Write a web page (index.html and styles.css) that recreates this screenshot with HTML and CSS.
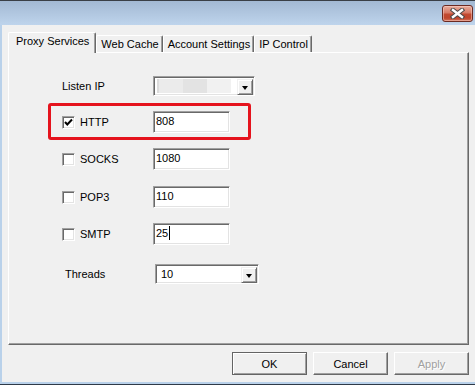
FILE: index.html
```html
<!DOCTYPE html>
<html lang="en">
<head>
<meta charset="UTF-8">
<title>Proxy Settings</title>
<link rel="stylesheet" href="styles.css">
</head>
<body>
  <div class="window">
    <div class="titlebar">
      <button class="close">
        <svg width="15" height="11" viewBox="0 0 15 11">
          <path d="M3 2 L12 9 M12 2 L3 9" stroke="#4a4a4a" stroke-width="4.4" stroke-linecap="square"/>
          <path d="M3 2 L12 9 M12 2 L3 9" stroke="#fff" stroke-width="2.4" stroke-linecap="square"/>
        </svg>
      </button>
    </div>

    <div class="client">
      <div class="tabs">
        <div class="tab active">Proxy Services</div>
        <div class="tab">Web Cache</div>
        <div class="tab">Account Settings</div>
        <div class="tab">IP Control</div>
      </div>

      <div class="panel">
        <div class="fields">
          <div class="row row-ip">
            <span class="label">Listen IP</span>
            <div class="combo">
              <div class="combo-value blurred"></div>
              <span class="drop"><i></i></span>
            </div>
          </div>

          <div class="highlight">
            <div class="row">
              <label class="label check"><span class="box"><svg width="9" height="9" viewBox="0 0 9 9"><path d="M1 4 L3.3 6.5 L8 1.5" fill="none" stroke="#000" stroke-width="2"/></svg></span>HTTP</label>
              <div class="edit">808</div>
            </div>
          </div>

          <div class="row row-socks">
            <label class="label check"><span class="box"></span>SOCKS</label>
            <div class="edit">1080</div>
          </div>

          <div class="row row-pop">
            <label class="label check"><span class="box"></span>POP3</label>
            <div class="edit">110</div>
          </div>

          <div class="row row-smtp">
            <label class="label check"><span class="box"></span>SMTP</label>
            <div class="edit">25<span class="caret"></span></div>
          </div>

          <div class="row row-threads">
            <span class="label">Threads</span>
            <div class="combo combo-threads">
              <div class="combo-value">10</div>
              <span class="drop"><i></i></span>
            </div>
          </div>
        </div>
      </div>

      <div class="buttons">
        <button class="btn default">OK</button>
        <button class="btn">Cancel</button>
        <button class="btn" disabled>Apply</button>
      </div>
    </div>
  </div>
</body>
</html>
```

FILE: styles.css
```css
body {
  margin: 0;
  width: 475px;
  height: 385px;
  overflow: hidden;
  background: #f0f0f0;
  font-family: "Liberation Sans", Arial, sans-serif;
  font-size: 11px;
  color: #000;
}

.window {
  height: 385px;
  display: flex;
  flex-direction: column;
  border-bottom: 1px solid #2e3a48;
  box-sizing: border-box;
}

.titlebar {
  height: 25px;
  box-sizing: border-box;
  border-top: 1px solid #3a3f46;
  background: linear-gradient(#a3b9d3, #bed4ec);
  display: flex;
  justify-content: flex-end;
  padding: 4px 2px 0 0;
}

.close {
  width: 31px;
  height: 17px;
  padding: 0;
  border: 1px solid #6b2a22;
  border-radius: 3px;
  background: linear-gradient(#e8ad9d 0%, #d77a66 45%, #c24a31 55%, #c0452c 80%, #d2745c 100%);
  box-shadow: inset 0 0 0 1px rgba(255, 220, 210, 0.45);
  display: flex;
  align-items: center;
  justify-content: center;
}

.client {
  flex: 1;
  border-left: 2px solid #b9d1ea;
  border-bottom: 2px solid #b9d1ea;
  padding: 7px 6px 7px 6px;
  display: flex;
  flex-direction: column;
}

/* tabs */
.tabs {
  display: flex;
  align-items: flex-end;
  height: 20px;
}

.tab {
  height: 17px;
  line-height: 16px;
  padding: 0 3px 0 4px;
  border-top: 1px solid #fff;
  border-left: 1px solid #fff;
  border-right: 1px solid #696969;
  box-shadow: inset -1px 0 #a0a0a0;
  border-radius: 2px 2px 0 0;
  box-sizing: border-box;
  white-space: nowrap;
}

.tab.active {
  height: 21px;
  line-height: 17px;
  padding: 0 6px 0 7px;
  margin-bottom: -1px;
  background: #f0f0f0;
  position: relative;
  z-index: 1;
}

.panel {
  height: 293px;
  box-sizing: border-box;
  border-top: 1px solid #fff;
  border-left: 1px solid #fff;
  border-right: 1px solid #696969;
  border-bottom: 1px solid #696969;
  box-shadow: inset -1px -1px #a0a0a0;
  padding: 23px 0 0 53px;
}

/* form */
.fields {
  display: flex;
  flex-direction: column;
  align-items: flex-start;
}

.row {
  display: flex;
  align-items: center;
  height: 22px;
}

.label {
  width: 91px;
  white-space: nowrap;
}

.check {
  display: flex;
  align-items: center;
  gap: 5px;
}

.box {
  width: 13px;
  height: 13px;
  box-sizing: border-box;
  border: 1px solid;
  border-color: #a0a0a0 #fff #fff #a0a0a0;
  box-shadow: inset 1px 1px #696969, inset -1px -1px #e3e3e3;
  background: #fff;
  display: flex;
  align-items: center;
  justify-content: center;
}

.edit {
  width: 77px;
  height: 22px;
  box-sizing: border-box;
  border: 1px solid;
  border-color: #a0a0a0 #fff #fff #a0a0a0;
  box-shadow: inset 1px 1px #696969, inset -1px -1px #e3e3e3;
  background: #fff;
  padding: 2px 0 0 2px;
  line-height: 14px;
  display: flex;
}

.caret {
  width: 1px;
  height: 14px;
  background: #000;
  margin-left: 1px;
}

.highlight {
  margin: 7px 0 0 -14px;
  padding: 5px 18px 4px 11px;
  border: 3px solid #e5131d;
  border-radius: 3px;
}

.row-ip { height: 20px; }
.row-socks { margin-top: 8px; }
.row-pop { margin-top: 16px; }
.row-smtp { margin-top: 15px; }

.row-threads {
  height: 20px;
  margin-top: 19px;
  padding-left: 3px;
}

.row-threads .label { width: 90px; }

.combo {
  width: 102px;
  height: 20px;
  box-sizing: border-box;
  border: 1px solid;
  border-color: #a0a0a0 #fff #fff #a0a0a0;
  box-shadow: inset 1px 1px #696969, inset -1px -1px #e3e3e3;
  background: #fff;
  display: flex;
  padding: 2px 1px 2px 2px;
}

.combo-threads { width: 104px; }

.combo-value {
  flex: 1;
  padding-left: 3px;
  line-height: 15px;
}

.combo-value.blurred {
  margin: 0 6px 0 1px;
  background: linear-gradient(90deg, #dcdcdc 0 2px, #ebebeb 2px 26px, #e3e3e3 26px 50px, #f1f1f1 50px 100%);
}

.drop {
  width: 16px;
  height: 16px;
  box-sizing: border-box;
  border: 1px solid;
  border-color: #f0f0f0 #696969 #696969 #f0f0f0;
  box-shadow: inset 1px 1px #fff, inset -1px -1px #a0a0a0;
  background: #f0f0f0;
  display: flex;
  align-items: center;
  justify-content: center;
}

.drop i {
  width: 0;
  height: 0;
  border-left: 3.5px solid transparent;
  border-right: 3.5px solid transparent;
  border-top: 4px solid #000;
  margin-top: 1px;
}

/* dialog buttons */
.buttons {
  display: flex;
  justify-content: flex-end;
  gap: 6px;
  margin-top: 7px;
}

.btn {
  width: 75px;
  height: 23px;
  padding: 0;
  font: inherit;
  color: #000;
  background: #f0f0f0;
  border: 1px solid;
  border-color: #fff #696969 #696969 #fff;
  box-shadow: inset -1px -1px #a0a0a0;
}

.btn.default {
  border-color: #646464;
  box-shadow: inset 1px 1px #fff, inset -1px -1px #a0a0a0;
}

.btn:disabled {
  color: #a0a0a0;
  text-shadow: 1px 1px #fff;
}
```
